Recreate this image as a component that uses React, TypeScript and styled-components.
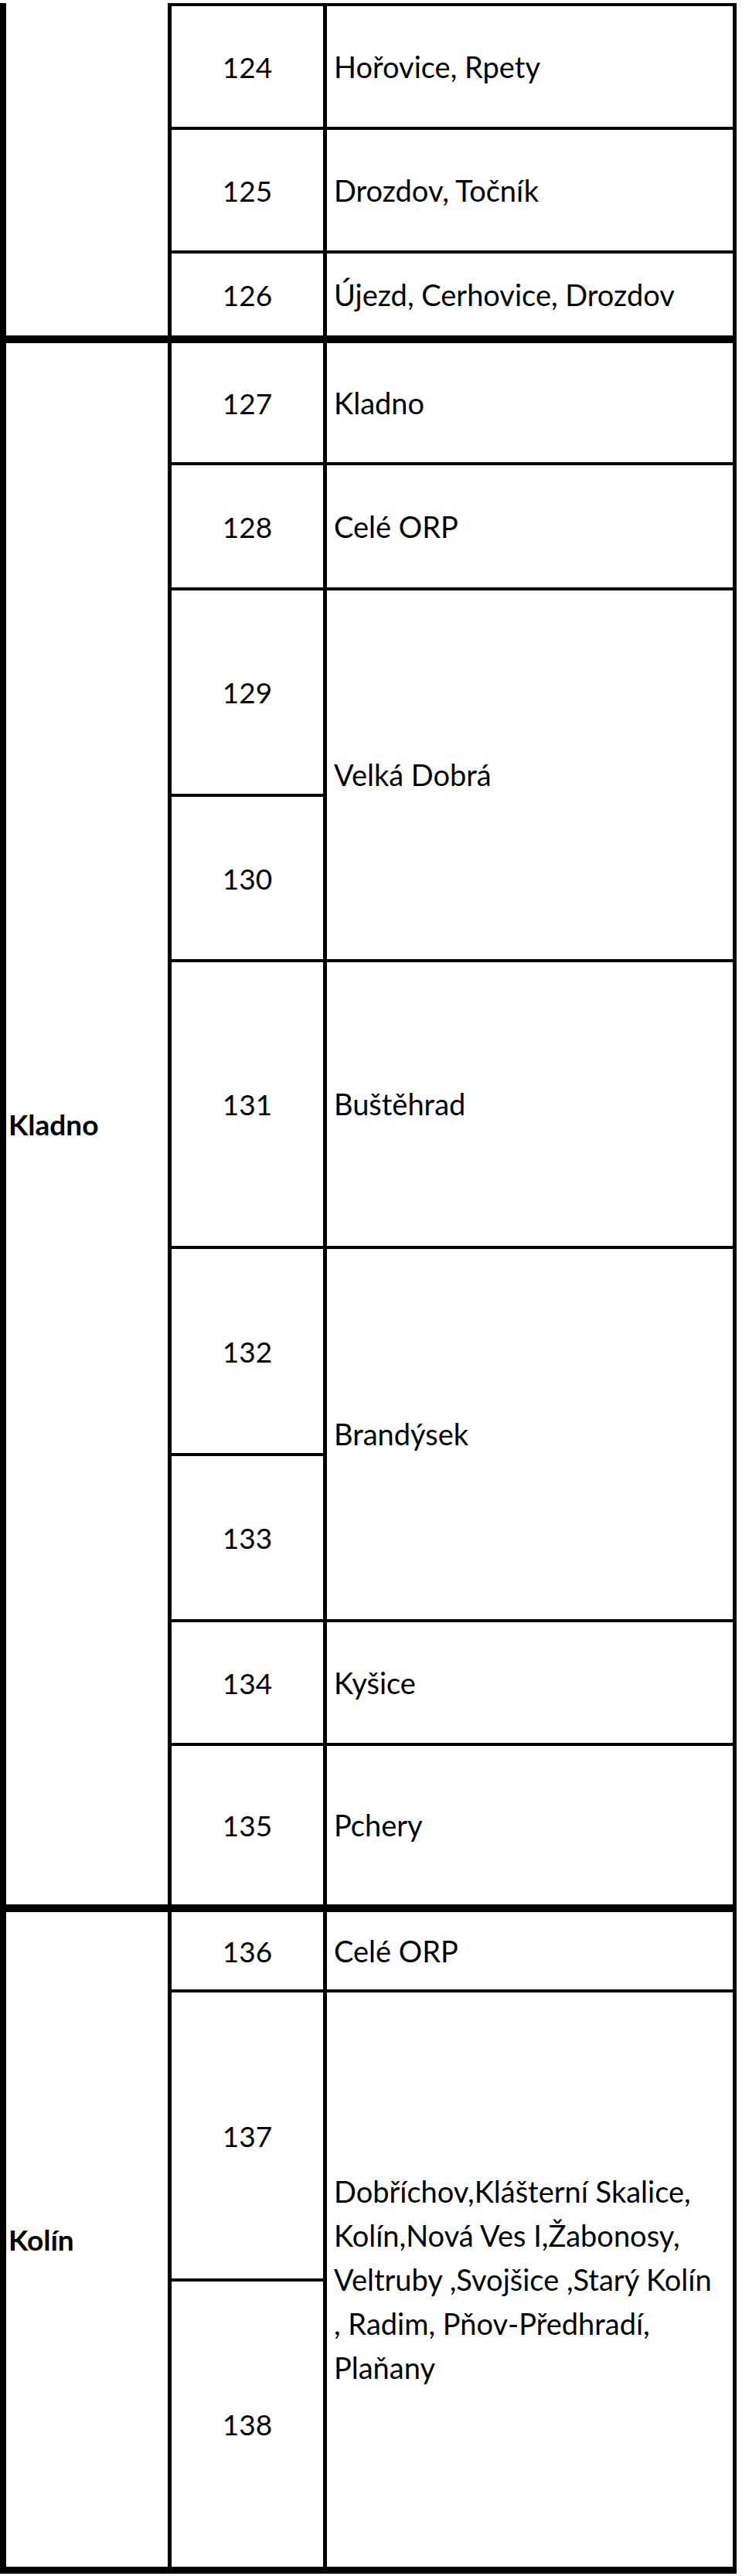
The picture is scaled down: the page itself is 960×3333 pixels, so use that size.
import React from 'react'
import styled, { createGlobalStyle } from 'styled-components'

const GlobalStyle = createGlobalStyle`
  html, body {
    margin: 0;
    padding: 0;
    background: #fff;
  }
  body {
    font-family: Lato, 'Open Sans', sans-serif;
    color: #000;
  }
`

const Sheet = styled.div<{ $rows: string }>`
  display: grid;
  grid-template-columns: 222px 201px 530px;
  grid-template-rows: ${({ $rows }) => $rows};
  width: 953px;
  margin-top: 4px;
`

const Cell = styled.div<{ $row: number; $span: number; $bottom: number; $top?: boolean }>`
  grid-row: ${({ $row }) => $row} / span ${({ $span }) => $span};
  display: flex;
  align-items: center;
  box-sizing: border-box;
  min-width: 0;
  border-right: 5px solid #000;
  border-bottom: ${({ $bottom }) => $bottom}px solid #000;
  border-top: ${({ $top }) => ($top ? '4px solid #000' : 'none')};
`

const GroupCell = styled(Cell)`
  grid-column: 1;
  border-left: 8px solid #000;
  padding-left: 3px;
  font-size: 37px;
  font-weight: 700;
`

const NumCell = styled(Cell)`
  grid-column: 2;
  justify-content: center;
  font-size: 37px;
`

const NameCell = styled(Cell)`
  grid-column: 3;
  padding-left: 9px;
  font-size: 38px;
  line-height: 57px;
`

// track heights include the cell's bottom line (and the top line for the first row)
const rows = [
  { n: 124, h: 164 },
  { n: 125, h: 160 },
  { n: 126, h: 116 },
  { n: 127, h: 158 },
  { n: 128, h: 162 },
  { n: 129, h: 267 },
  { n: 130, h: 214 },
  { n: 131, h: 371 },
  { n: 132, h: 268 },
  { n: 133, h: 215 },
  { n: 134, h: 160 },
  { n: 135, h: 215 },
  { n: 136, h: 104 },
  { n: 137, h: 374 },
  { n: 138, h: 378 },
]

const groups = [
  { row: 1, span: 3, label: '' },
  { row: 4, span: 9, label: 'Kladno' },
  { row: 13, span: 3, label: 'Kolín' },
]

const names = [
  { row: 1, span: 1, lines: ['Hořovice, Rpety'] },
  { row: 2, span: 1, lines: ['Drozdov, Točník'] },
  { row: 3, span: 1, lines: ['Újezd, Cerhovice, Drozdov'] },
  { row: 4, span: 1, lines: ['Kladno'] },
  { row: 5, span: 1, lines: ['Celé ORP'] },
  { row: 6, span: 2, lines: ['Velká Dobrá'] },
  { row: 8, span: 1, lines: ['Buštěhrad'] },
  { row: 9, span: 2, lines: ['Brandýsek'] },
  { row: 11, span: 1, lines: ['Kyšice'] },
  { row: 12, span: 1, lines: ['Pchery'] },
  { row: 13, span: 1, lines: ['Celé ORP'] },
  {
    row: 14,
    span: 2,
    lines: [
      'Dobříchov,Klášterní Skalice,',
      'Kolín,Nová Ves I,Žabonosy,',
      'Veltruby ,Svojšice ,Starý Kolín',
      ', Radim, Pňov-Předhradí,',
      'Plaňany',
    ],
  },
]

// line under the last row a cell covers
const lineUnder = (lastRow: number) => {
  if (lastRow === rows.length) return 9
  if (groups.some((g) => g.row + g.span - 1 === lastRow)) return 10
  return 4
}

const App = () => {
  return (
    <>
      <GlobalStyle />
      <Sheet $rows={rows.map((r) => `${r.h}px`).join(' ')}>
        {groups.map((g) => (
          <GroupCell key={g.row} $row={g.row} $span={g.span} $bottom={lineUnder(g.row + g.span - 1)}>
            {g.label}
          </GroupCell>
        ))}
        {rows.map((r, i) => (
          <NumCell key={r.n} $row={i + 1} $span={1} $bottom={lineUnder(i + 1)} $top={i === 0}>
            {r.n}
          </NumCell>
        ))}
        {names.map((c) => (
          <NameCell
            key={c.row}
            $row={c.row}
            $span={c.span}
            $bottom={lineUnder(c.row + c.span - 1)}
            $top={c.row === 1}
          >
            <div>
              {c.lines.map((l, i) => (
                <React.Fragment key={i}>
                  {i > 0 && <br />}
                  {l}
                </React.Fragment>
              ))}
            </div>
          </NameCell>
        ))}
      </Sheet>
    </>
  )
}

export default App
